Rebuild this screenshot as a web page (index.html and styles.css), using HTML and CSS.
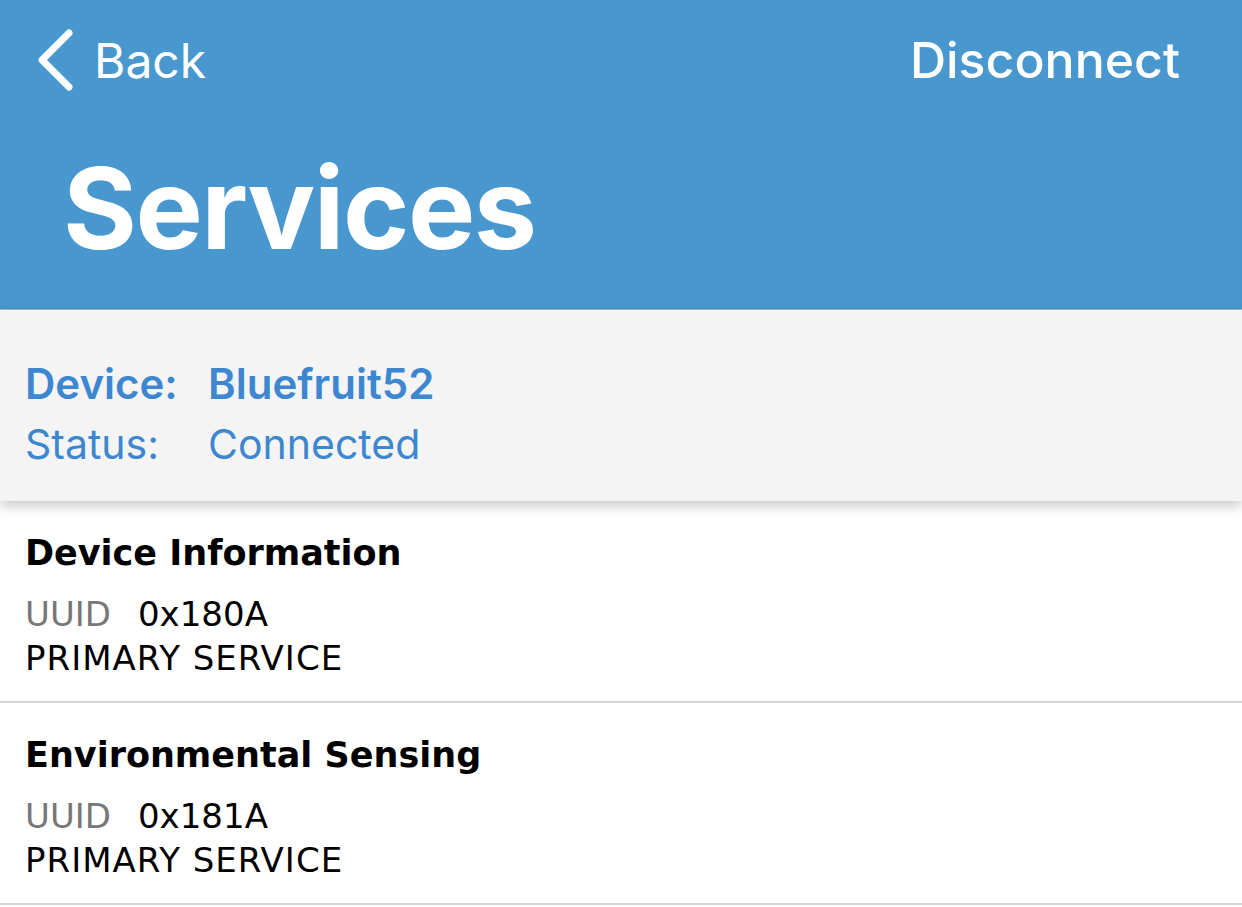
FILE: index.html
```html
<!DOCTYPE html>
<html>
<head>
<meta charset="utf-8">
<link rel="stylesheet" href="styles.css">
</head>
<body>
<div class="app">
  <header class="header">
    <div class="nav">
      <div class="back">
        <svg class="chev" width="40" height="64" viewBox="0 0 40 64"><polyline points="32,5 5,32 32,59" fill="none" stroke="#fff" stroke-width="7" stroke-linecap="round" stroke-linejoin="round"/></svg>
        <span>Back</span>
      </div>
      <div class="disconnect">Disconnect</div>
    </div>
    <h1 class="title">Services</h1>
  </header>
  <section class="info">
    <div class="row strong"><span class="label">Device:</span><span>Bluefruit52</span></div>
    <div class="row light"><span class="label">Status:</span><span>Connected</span></div>
  </section>
  <ul class="list">
    <li class="item">
      <div class="name">Device Information</div>
      <div class="uuid"><span class="muted">UUID</span><span>0x180A</span></div>
      <div class="kind">PRIMARY SERVICE</div>
    </li>
    <li class="item">
      <div class="name">Environmental Sensing</div>
      <div class="uuid"><span class="muted">UUID</span><span>0x181A</span></div>
      <div class="kind">PRIMARY SERVICE</div>
    </li>
  </ul>
</div>
</body>
</html>
```
FILE: styles.css
```css
* { box-sizing: border-box; }
html, body { margin: 0; padding: 0; background: #fff; }
body { font-family: Inter, "Noto Sans", sans-serif; width: 1242px; height: 907px; overflow: hidden; }
.header {
  background: #4897ce;
  height: 310px;
  border-bottom: 1px solid #a9b4bc;
  color: #fff;
}
.nav {
  display: flex;
  justify-content: space-between;
  align-items: center;
  padding: 28px 62px 0 37px;
  height: 92px;
}
.back { display: flex; align-items: center; gap: 17px; font-size: 48px; }
.chev { display: block; }
.disconnect { font-size: 50px; font-weight: 550; }
.title {
  margin: 0;
  padding: 60px 0 0 63px;
  font-size: 113px;
  font-weight: 700;
  line-height: 1;
  letter-spacing: -1.5px;
}
.info {
  background: #f4f4f4;
  padding: 44px 25px 27px;
  color: #3d87d1;
  font-size: 42px;
  position: relative;
  box-shadow: 0 5px 12px rgba(0,0,0,0.22);
  z-index: 1;
}
.row { display: grid; grid-template-columns: 183px auto; line-height: 60px; }
.row.strong { font-weight: 600; }
.row.light { font-size: 41px; }
.list { list-style: none; margin: 0; padding: 0; }
.item {
  padding: 25px 25px 0;
  height: 202px;
  border-bottom: 2px solid #d4d4d4;
  font-family: "DejaVu Sans", sans-serif;
}
.name { font-size: 35px; font-weight: 700; line-height: 54px; }
.uuid { font-size: 34px; line-height: 44px; margin-top: 12px; display: flex; gap: 27px; }
.muted { color: #777; }
.kind { font-size: 34px; line-height: 44px; letter-spacing: 1px; }
```
